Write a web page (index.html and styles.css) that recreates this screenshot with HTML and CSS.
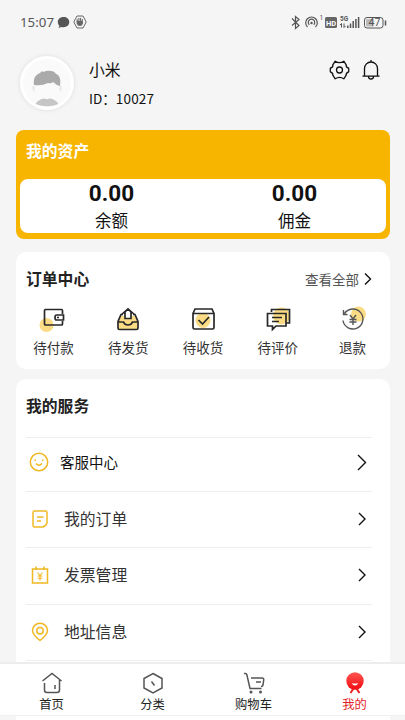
FILE: index.html
```
<!DOCTYPE html>
<html lang="zh-CN">
<head>
<meta charset="utf-8">
<meta name="viewport" content="width=device-width, initial-scale=1">
<title>我的</title>
<link rel="stylesheet" href="styles.css">
</head>
<body>
<div class="status">
  <span class="time">15:07</span>
  <svg class="chat" width="13" height="13" viewBox="0 0 13 13"><path d="M6.500 1C3 1 .8 3.200.8 6c0 1.700.7 3 1.700 3.900L1.400 12l3-1c.6.2 1.400.3 2.100.3 3.400 0 5.800-2.200 5.800-5.200S9.900 1 6.500 1z" fill="#555"/></svg>
  <svg class="hand" width="14" height="14" viewBox="0 0 14 14"><path d="M4 1h6l3.200 6L10 13H4L.8 7z" fill="none" stroke="#666"/><path d="M4.200 7V4.500M5.900 6V3.300M7.600 6V3.300M9.300 7V4.500" stroke="#666" stroke-width="1.100" stroke-linecap="round"/><path d="M3.700 6h6.200v2.500q-.5 2.500-3 2.500T3.700 8.500z" fill="#666"/></svg>
  <svg class="signals" width="98" height="18" viewBox="0 0 98 18" fill="none" stroke="#555">
    <path d="M1 5.500l7 7-3.500 3v-12L8 6.500l-7 6" stroke-width="1.200"/>
    <path d="M16.500 14A5.800 5.800 0 1 1 24.500 14M18.300 11.700A3.200 3.200 0 1 1 22.700 11.700" stroke-width="1.200"/><circle cx="20.500" cy="10" r="1.200" fill="#555" stroke="none"/>
    <rect x="34" y="4" width="12" height="11" rx="1.500" fill="#666" stroke="none"/>
    <path d="M50.500 14.500v-4l-1.500 1.500M53 10.500v4l1.500-1.500" stroke-width="1"/>
    <path d="M56.800 15v-2.500M59.500 15v-4.500M62.200 15V8M64.900 15V6M67.600 15V4" stroke-width="1.500"/>
    <rect x="73.500" y="4.500" width="18.500" height="10.500" rx="2.500"/><rect x="75" y="6" width="7.500" height="7.500" rx="1" fill="#bbb" stroke="none"/><path d="M94.500 7.500v5" stroke-width="1.500"/>
    <g fill="#555" stroke="none"><text x="28.500" y="7" class="t6">1</text><text x="49" y="8" class="t6 bold">5G</text><text x="77.500" y="13.200" class="t9">47</text></g>
    <text x="35" y="12.500" class="thd" fill="#fff" stroke="none">HD</text>
  </svg>
</div>

<header class="profile">
  <div class="avatar">
    <svg width="48" height="48" viewBox="0 0 48 48"><path d="M10 27q-1-1-.5 3 .5 3 2 3V27zM38 27q1-1 .5 3-.5 3-2 3V27z" fill="#e8e8e8"/><path d="M11 26c-1-6 1-10 6-12l2-2 1 1 3-1c6-1 9 1 10 3 4 1 5 6 4 12q-4-1-7-4-2 2-5 1-6 3-14 2z" fill="#aaa"/><path d="M12.500 45q3-5 9-5.500 2.500 1.500 5 0 6 .5 9 5.500-11 4.500-23 0z" fill="#c6c6c6"/></svg>
  </div>
  <div class="who"><div class="name">小米</div><div class="uid">ID：<span>10027</span></div></div>
  <svg class="tools" width="52" height="22" viewBox="0 0 52 22" fill="none" stroke="#111" stroke-width="1.300" stroke-linejoin="round">
    <path d="M6.200 2.200Q10.500 5 14.800 2.200L17.200 5.800Q16.600 8 19.700 9.200V12.800Q16.600 14 17.200 16.200L14.800 19.800Q10.500 17 6.200 19.800L3.800 16.200Q4.400 14 1.300 12.800V9.200Q4.400 8 3.800 5.800Z"/><circle cx="10.500" cy="11" r="3"/>
    <path d="M35.500 17V9.500a6.500 6.500 0 0 1 13 0V17M33.500 17.200h17M42 1v2M39.500 17.500q0 2.500 2.500 2.500t2.500-2.500"/>
  </svg>
</header>

<section class="assets">
  <h2>我的资产</h2>
  <div class="balances">
    <div class="bal"><b>0.00</b><span>余额</span></div>
    <div class="bal"><b>0.00</b><span>佣金</span></div>
  </div>
</section>

<section class="card orders">
  <div class="head"><h2>订单中心</h2><span class="all">查看全部</span><svg width="8" height="14" viewBox="0 0 8 14" class="arrow"><path d="M1 1.500l5.500 5.500L1 12.500"/></svg></div>
  <div class="grid">
    <div class="item"><svg width="28" height="28" viewBox="0 0 28 28"><circle cx="7.500" cy="19" r="7" fill="#fbdc85"/><path d="M23.500 8V4.500q0-1-1-1h-16q-1 0-1 1v13.500q0 1 1 1h16q1 0 1-1V15M24.500 9h-7q-1.500 0-1.500 2.500T17.500 14h7zM18 11.500h2"/></svg><span>待付款</span></div>
    <div class="item"><svg width="28" height="28" viewBox="0 0 28 28"><path d="M4 16L6 10h16l2 6v7H4z" fill="#fbdc85"/><path d="M10.500 12.500V7h-2L14 2.500 19.500 7h-2v5.500z" fill="#fff"/><path d="M9 8.500H7L4 15.500V22q0 1.500 1.500 1.500h17Q24 23.500 24 22v-6.500L21 8.500h-2M4 16h5.500q1 3 4.500 3t4.500-3H24M11 12.500V7H9.500L14 3l4.500 4H17v5.500z"/></svg><span>待发货</span></div>
    <div class="item"><svg width="28" height="28" viewBox="0 0 28 28"><circle cx="14" cy="14.500" r="7.500" fill="#fbdc85"/><path d="M4 7.500h21v14q0 1.500-1.500 1.500h-18Q4 23 4 21.500zL6 3h17l2 4.500M9.500 14l4 4 6.500-7"/></svg><span>待收货</span></div>
    <div class="item"><svg width="28" height="28" viewBox="0 0 28 28"><circle cx="17.500" cy="10" r="8.500" fill="#fbdc85"/><path d="M7.500 6V3.500h18V17h-3M3.500 7.500h18.500V20H12l-3.500 3.500V20h-5zM8 11.500h10M8 15.500h7"/></svg><span>待评价</span></div>
    <div class="item"><svg width="28" height="28" viewBox="0 0 28 28"><circle cx="19.500" cy="8" r="7.500" fill="#fbdc85"/><path class="thin" d="M5.500 7.500A10 10 0 1 1 4 14.500M4.500 4v4.500h4M11 9l3 4 3-4M14 13v6M10.500 13.500h7M10.500 16h7"/></svg><span>退款</span></div>
  </div>
</section>

<section class="card services">
  <h2>我的服务</h2>
  <div class="row first"><svg class="ico" width="20" height="20" viewBox="0 0 20 20"><circle cx="10" cy="10" r="8.700"/><path d="M5.500 8.200h1.500M13 8.200h1.500M7 11.500q3 3.500 6 0"/></svg><span>客服中心</span><svg width="10" height="17" viewBox="0 0 10 17" class="arrow"><path d="M1 1l7.500 7.500L1 16"/></svg></div>
  <div class="row"><svg class="ico" width="20" height="20" viewBox="0 0 20 20"><path d="M3 3.500Q3 2 4.500 2h11Q17 2 17 3.500V14q-1 3.500-4.500 4h-8Q3 18 3 16.500zM7 8h6.500M7 12h4"/></svg><span>我的订单</span><svg width="10" height="14" viewBox="0 0 10 14" class="arrow"><path d="M2 1l6 6-6 6"/></svg></div>
  <div class="row"><svg class="ico" width="20" height="20" viewBox="0 0 20 20"><path d="M2.500 4h15v14h-15zM6 1.500V5M14 1.500V5"/><path class="yen" d="M7.500 7.500l2.500 3 2.500-3M10 10.500V15.500M7.500 11h5M7.500 13.300h5"/></svg><span>发票管理</span><svg width="10" height="14" viewBox="0 0 10 14" class="arrow"><path d="M2 1l6 6-6 6"/></svg></div>
  <div class="row"><svg class="ico" width="20" height="20" viewBox="0 0 20 20"><path d="M10 18.500Q2.500 12.500 2.500 8.500a7.500 7.200 0 0 1 15 0Q17.500 12.500 10 18.500z"/><circle cx="10" cy="8.800" r="3.200"/></svg><span>地址信息</span><svg width="10" height="14" viewBox="0 0 10 14" class="arrow"><path d="M2 1l6 6-6 6"/></svg></div>
  <div class="row"></div>
</section>

<nav class="tabs">
  <div class="tab"><svg width="24" height="24" viewBox="0 0 24 24"><path d="M2.500 10L12 2.500l9.500 7.500M4.500 12v7q0 2.500 2.500 2.500h10q2.500 0 2.500-2.500V9M15 14v4"/></svg><span>首页</span></div>
  <div class="tab"><svg width="24" height="24" viewBox="0 0 24 24"><path d="M12 2.500l9 5v9.500l-9 5-9-5V7.500zM10.500 10.500l3 4"/></svg><span>分类</span></div>
  <div class="tab"><svg width="24" height="24" viewBox="0 0 24 24"><path d="M2 2.500h1.500q1 0 1.300 1L8 17.500h11.500M9 7h11q2 0 1.700 1.800L21 14q-.3 1.500-2 1.500M14 11h5"/><circle cx="9" cy="21" r="1.500" class="dot"/><circle cx="18.500" cy="21" r="1.500" class="dot"/></svg><span>购物车</span></div>
  <div class="tab active"><svg width="24" height="24" viewBox="0 0 24 24"><defs><linearGradient id="g" x2="0" y2="1"><stop stop-color="#ff5650"/><stop offset="1" stop-color="#f00a12"/></linearGradient></defs><circle cx="12" cy="10" r="8.700" fill="url(#g)" stroke="none"/><path class="smile" d="M9 12q3 1 6 0-.5 2.500-3 2.500T9 12z"/><path class="legs" d="M10.500 17.500L7.500 22M13.500 17.500l3 4.500"/></svg><span>我的</span></div>
</nav>
</body>
</html>
```

FILE: styles.css
```
* { box-sizing: border-box; }
body {
  margin: 0;
  height: 720px;
  overflow: hidden;
  background: #f5f5f5;
  color: #111;
  font-family: "Noto Sans CJK SC", sans-serif;
}
h2 { margin: 0; font-size: 15.800px; font-weight: 700; line-height: 24px; color: #222; }
svg { display: block; flex: none; }

.status { display: flex; align-items: center; height: 45px; padding: 0 16px 1px 20px; color: #555; }
.time { flex: none; width: 37px; font: 13.300px/20px "Noto Sans", sans-serif; }
.hand { margin-left: 3px; }
.signals { margin-left: auto; font-family: Roboto, sans-serif; }
.t6 { font-size: 6.500px; }
.t9 { font-size: 10.500px; }
.thd { font-size: 7.500px; font-weight: 700; }
.bold { font-weight: 700; }

.profile { display: flex; height: 85px; padding: 10px 24px 0 20px; }
.avatar {
  width: 54px; height: 54px; margin-top: 1px;
  display: flex; align-items: center; justify-content: center;
  border: 3px solid #fff; border-radius: 50%;
  background: #fafafa; box-shadow: 0 0 4px #ddd;
}
.who { flex: 1; padding: 3px 0 0 15px; }
.name { font-size: 15.800px; line-height: 24px; }
.uid { margin-top: 6px; font-size: 13.500px; line-height: 20px; white-space: nowrap; }
.uid span { letter-spacing: .2px; }
.tools { margin-top: 4px; }

.assets { height: 109px; margin: 0 15px 0 16px; padding: 9px 4px 0; border-radius: 8px; background: #f7b500; }
.assets h2 { padding-left: 6px; color: #fff; }
.balances { display: flex; height: 54px; margin-top: 16px; border-radius: 8px; background: #fff; }
.bal { flex: 1; display: flex; flex-direction: column; align-items: center; }
.bal b { font: 700 22.500px/28px Roboto, sans-serif; }
.bal span { font-size: 16.500px; line-height: 26px; }

.card { margin: 13px 15px 0 16px; border-radius: 10px; background: #fff; }
.orders { height: 117px; padding-top: 15px; }
.head { display: flex; align-items: center; padding: 0 18px 0 10px; }
.all { margin-left: auto; margin-right: 5px; color: #555; font-size: 13.500px; line-height: 24px; }
.arrow { fill: none; stroke: #111; stroke-width: 1.400; }
.grid { display: grid; grid-template-columns: repeat(5, 1fr); margin-top: 14px; }
.item { display: flex; flex-direction: column; align-items: center; font-size: 13.500px; line-height: 20px; color: #333; }
.item svg { width: 28px; height: 28px; margin-top: 1px; fill: none; stroke: #282828; stroke-width: 1.700; }
.item svg circle { stroke: none; }
.item svg path[fill] { stroke: none; }
.item .thin { stroke: #555; stroke-width: 1.400; }
.item span { margin-top: 3px; }

.services { height: 360px; margin-top: 10px; padding: 15px 18px 0 10px; }
.services h2 { height: 43px; }
.row { display: flex; align-items: center; height: 56.300px; padding: 0 5px 1px 4px; border-top: 1px solid #eee; font-size: 15.800px; color: #333; }
.row span { flex: 1; margin-left: 14px; line-height: 24px; }
.ico { fill: none; stroke: #f0b823; stroke-width: 1.500; }
.yen { stroke-width: 1.100; }
.first { height: 54px; padding: 0 5px 5px 3px; font-size: 14.500px; color: #111; }
.first span { margin-left: 11px; }

.tabs {
  position: fixed; left: 0; right: 0; bottom: 4px;
  display: flex; height: 54px; padding: 7px 0 0 1px;
  background: #fff; border-top: 2px solid #ededed; border-bottom: 1px solid #f0f0f0;
}
.tab { flex: 1 1 0; width: 0; display: flex; flex-direction: column; align-items: center; font-size: 12.300px; line-height: 18px; color: #222; }
.tab svg { width: 24px; height: 24px; fill: none; stroke: #555; stroke-width: 1.500; }
.tab .dot { fill: #555; stroke: none; }
.tab.active { color: #e32528; }
.tab .smile { fill: #fff; stroke: none; }
.tab .legs { stroke: #ee2020; stroke-width: 2; }
```
